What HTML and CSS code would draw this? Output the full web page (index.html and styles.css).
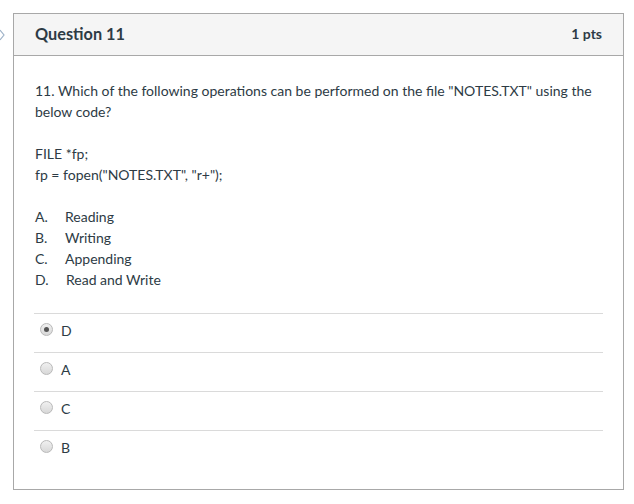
FILE: index.html
```html
<!DOCTYPE html>
<html>
<head>
<meta charset="utf-8">
<link rel="stylesheet" href="styles.css">
</head>
<body>
<div class="page">
  <div class="nav">
    <svg class="chev" width="13" height="12" viewBox="0 0 13 12"><path d="M0 1 L4 6 L0 11" fill="none" stroke="#9fb3c8" stroke-width="1.2"/></svg>
  </div>
  <div class="card">
    <div class="head">
      <h2 class="title">Question 11</h2>
      <span class="pts">1 pts</span>
    </div>
    <div class="body">
      <div class="text">
        <p>11. Which of the following operations can be performed on the file "NOTES.TXT" using the below code?</p>
        <p>FILE *fp;<br>fp = fopen("NOTES.TXT", "r+");</p>
        <ul class="opts">
          <li><span class="let">A.</span>Reading</li>
          <li><span class="let">B.</span>Writing</li>
          <li><span class="let">C.</span>Appending</li>
          <li><span class="let wide">D.</span>Read and Write</li>
        </ul>
      </div>
      <div class="answers">
        <label class="ans"><span class="radio checked"></span>D</label>
        <label class="ans"><span class="radio"></span>A</label>
        <label class="ans"><span class="radio"></span>C</label>
        <label class="ans"><span class="radio"></span>B</label>
      </div>
    </div>
  </div>
</div>
</body>
</html>
```
FILE: styles.css
```css
html, body {
  margin: 0;
  padding: 0;
  background: #fff;
}
body {
  font-family: Lato, "Open Sans", sans-serif;
  color: #2d3b45;
}
.page {
  display: flex;
  align-items: flex-start;
  padding-top: 13px;
}
.nav {
  width: 13px;
  flex: none;
  padding-top: 16px;
}
.chev {
  display: block;
}
.card {
  width: 609px;
  height: 475px;
  border: 1px solid #a8a8a8;
  box-sizing: content-box;
}
.head {
  display: flex;
  justify-content: space-between;
  align-items: center;
  height: 41px;
  background: #f5f5f5;
  border-bottom: 1px solid #a8a8a8;
  padding: 0 21px 0 21px;
}
.title {
  margin: 0 0 3px;
  font-size: 16.3px;
  font-weight: 700;
}
.pts {
  font-size: 14px;
  font-weight: 700;
  margin-bottom: 3px;
}
.body {
  padding: 24px 20px 0 20px;
}
.text {
  font-size: 14px;
  line-height: 21px;
  padding-left: 1px;
}
.text p {
  margin: 0 0 21px;
}
.opts {
  list-style: none;
  margin: 0;
  padding: 0;
}
.let {
  display: inline-block;
  width: 30px;
}
.let.wide {
  width: 31px;
}
.answers {
  margin-top: 23px;
}
.ans {
  display: flex;
  align-items: flex-start;
  height: 39px;
  box-sizing: border-box;
  padding-top: 8px;
  border-top: 1px solid #dadada;
  font-size: 14px;
  line-height: 17px;
  padding-left: 6px;
}
.radio {
  width: 11px;
  height: 11px;
  margin-top: 1px;
  border-radius: 50%;
  border: 1px solid #b9b9b9;
  background: linear-gradient(#f0f0f0, #d8d8d8);
  margin-right: 8px;
  position: relative;
  box-sizing: content-box;
}
.radio.checked::after {
  content: "";
  position: absolute;
  left: 3px;
  top: 3px;
  width: 5px;
  height: 5px;
  border-radius: 50%;
  background: #555;
}
```
